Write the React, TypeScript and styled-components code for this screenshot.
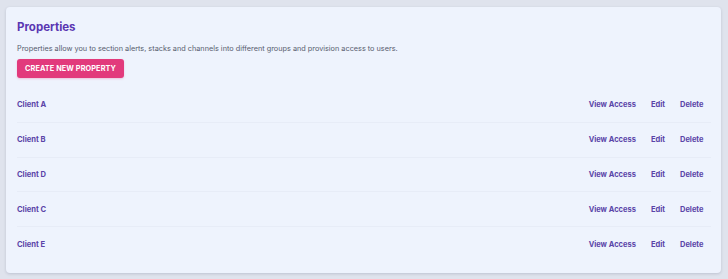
import React from 'react';
import styled, { createGlobalStyle } from 'styled-components';

const GlobalStyle = createGlobalStyle`
  html, body {
    margin: 0;
    padding: 0;
    background: #dfe3ed;
    font-family: Inter, 'Liberation Sans', Arial, sans-serif;
  }
`;

const Page = styled.div`
  padding: 7px 7px 7px 6px;
`;

const Card = styled.section`
  background: #eef3fd;
  border-radius: 4px;
  box-shadow: 0 1px 3px rgba(40, 50, 80, 0.18);
  padding: 12px 10px 11px 11px;
`;

const Title = styled.h1`
  margin: 0 0 8px 0;
  font-size: 11.5px;
  font-weight: 700;
  color: #5a36b2;
  line-height: 16px;
`;

const Description = styled.p`
  margin: 0 0 0 0;
  font-size: 7.3px;
  color: #575c6e;
  line-height: 12px;
`;

const CreateButton = styled.button`
  background: #e23a7c;
  color: #fff;
  border: none;
  border-radius: 3px;
  height: 19px;
  padding: 0 8px;
  font-family: inherit;
  font-size: 7.3px;
  font-weight: 700;
  letter-spacing: 0.1px;
  cursor: pointer;
  box-shadow: 0 1px 2px rgba(226, 58, 124, 0.25);
`;

const List = styled.ul`
  list-style: none;
  margin: 10px 0 0 0;
  padding: 0;
`;

const Row = styled.li<{ $last?: boolean }>`
  display: flex;
  align-items: center;
  justify-content: space-between;
  height: 34.75px;
  border-bottom: ${p => (p.$last ? 'none' : '1px solid #e7ecf7')};
  box-sizing: border-box;
`;

const Name = styled.span`
  font-size: 7.6px;
  font-weight: 700;
  color: #5a44a8;
`;

const Actions = styled.div`
  display: flex;
  align-items: center;
`;

const ActionLink = styled.a`
  font-size: 7.5px;
  font-weight: 700;
  color: #5a44a8;
  padding: 0 7.5px;
  text-decoration: none;
  cursor: pointer;
`;

const clients = ['Client A', 'Client B', 'Client D', 'Client C', 'Client E'];

const App: React.FC = () => (
  <>
    <GlobalStyle />
    <Page>
      <Card>
        <Title>Properties</Title>
        <Description>
          Properties allow you to section alerts, stacks and channels into different groups and provision access to users.
        </Description>
        <CreateButton type="button">CREATE NEW PROPERTY</CreateButton>
        <List>
          {clients.map((name, i) => (
            <Row key={name} $last={i === clients.length - 1}>
              <Name>{name}</Name>
              <Actions>
                <ActionLink>View Access</ActionLink>
                <ActionLink>Edit</ActionLink>
                <ActionLink>Delete</ActionLink>
              </Actions>
            </Row>
          ))}
        </List>
      </Card>
    </Page>
  </>
);

export default App;
